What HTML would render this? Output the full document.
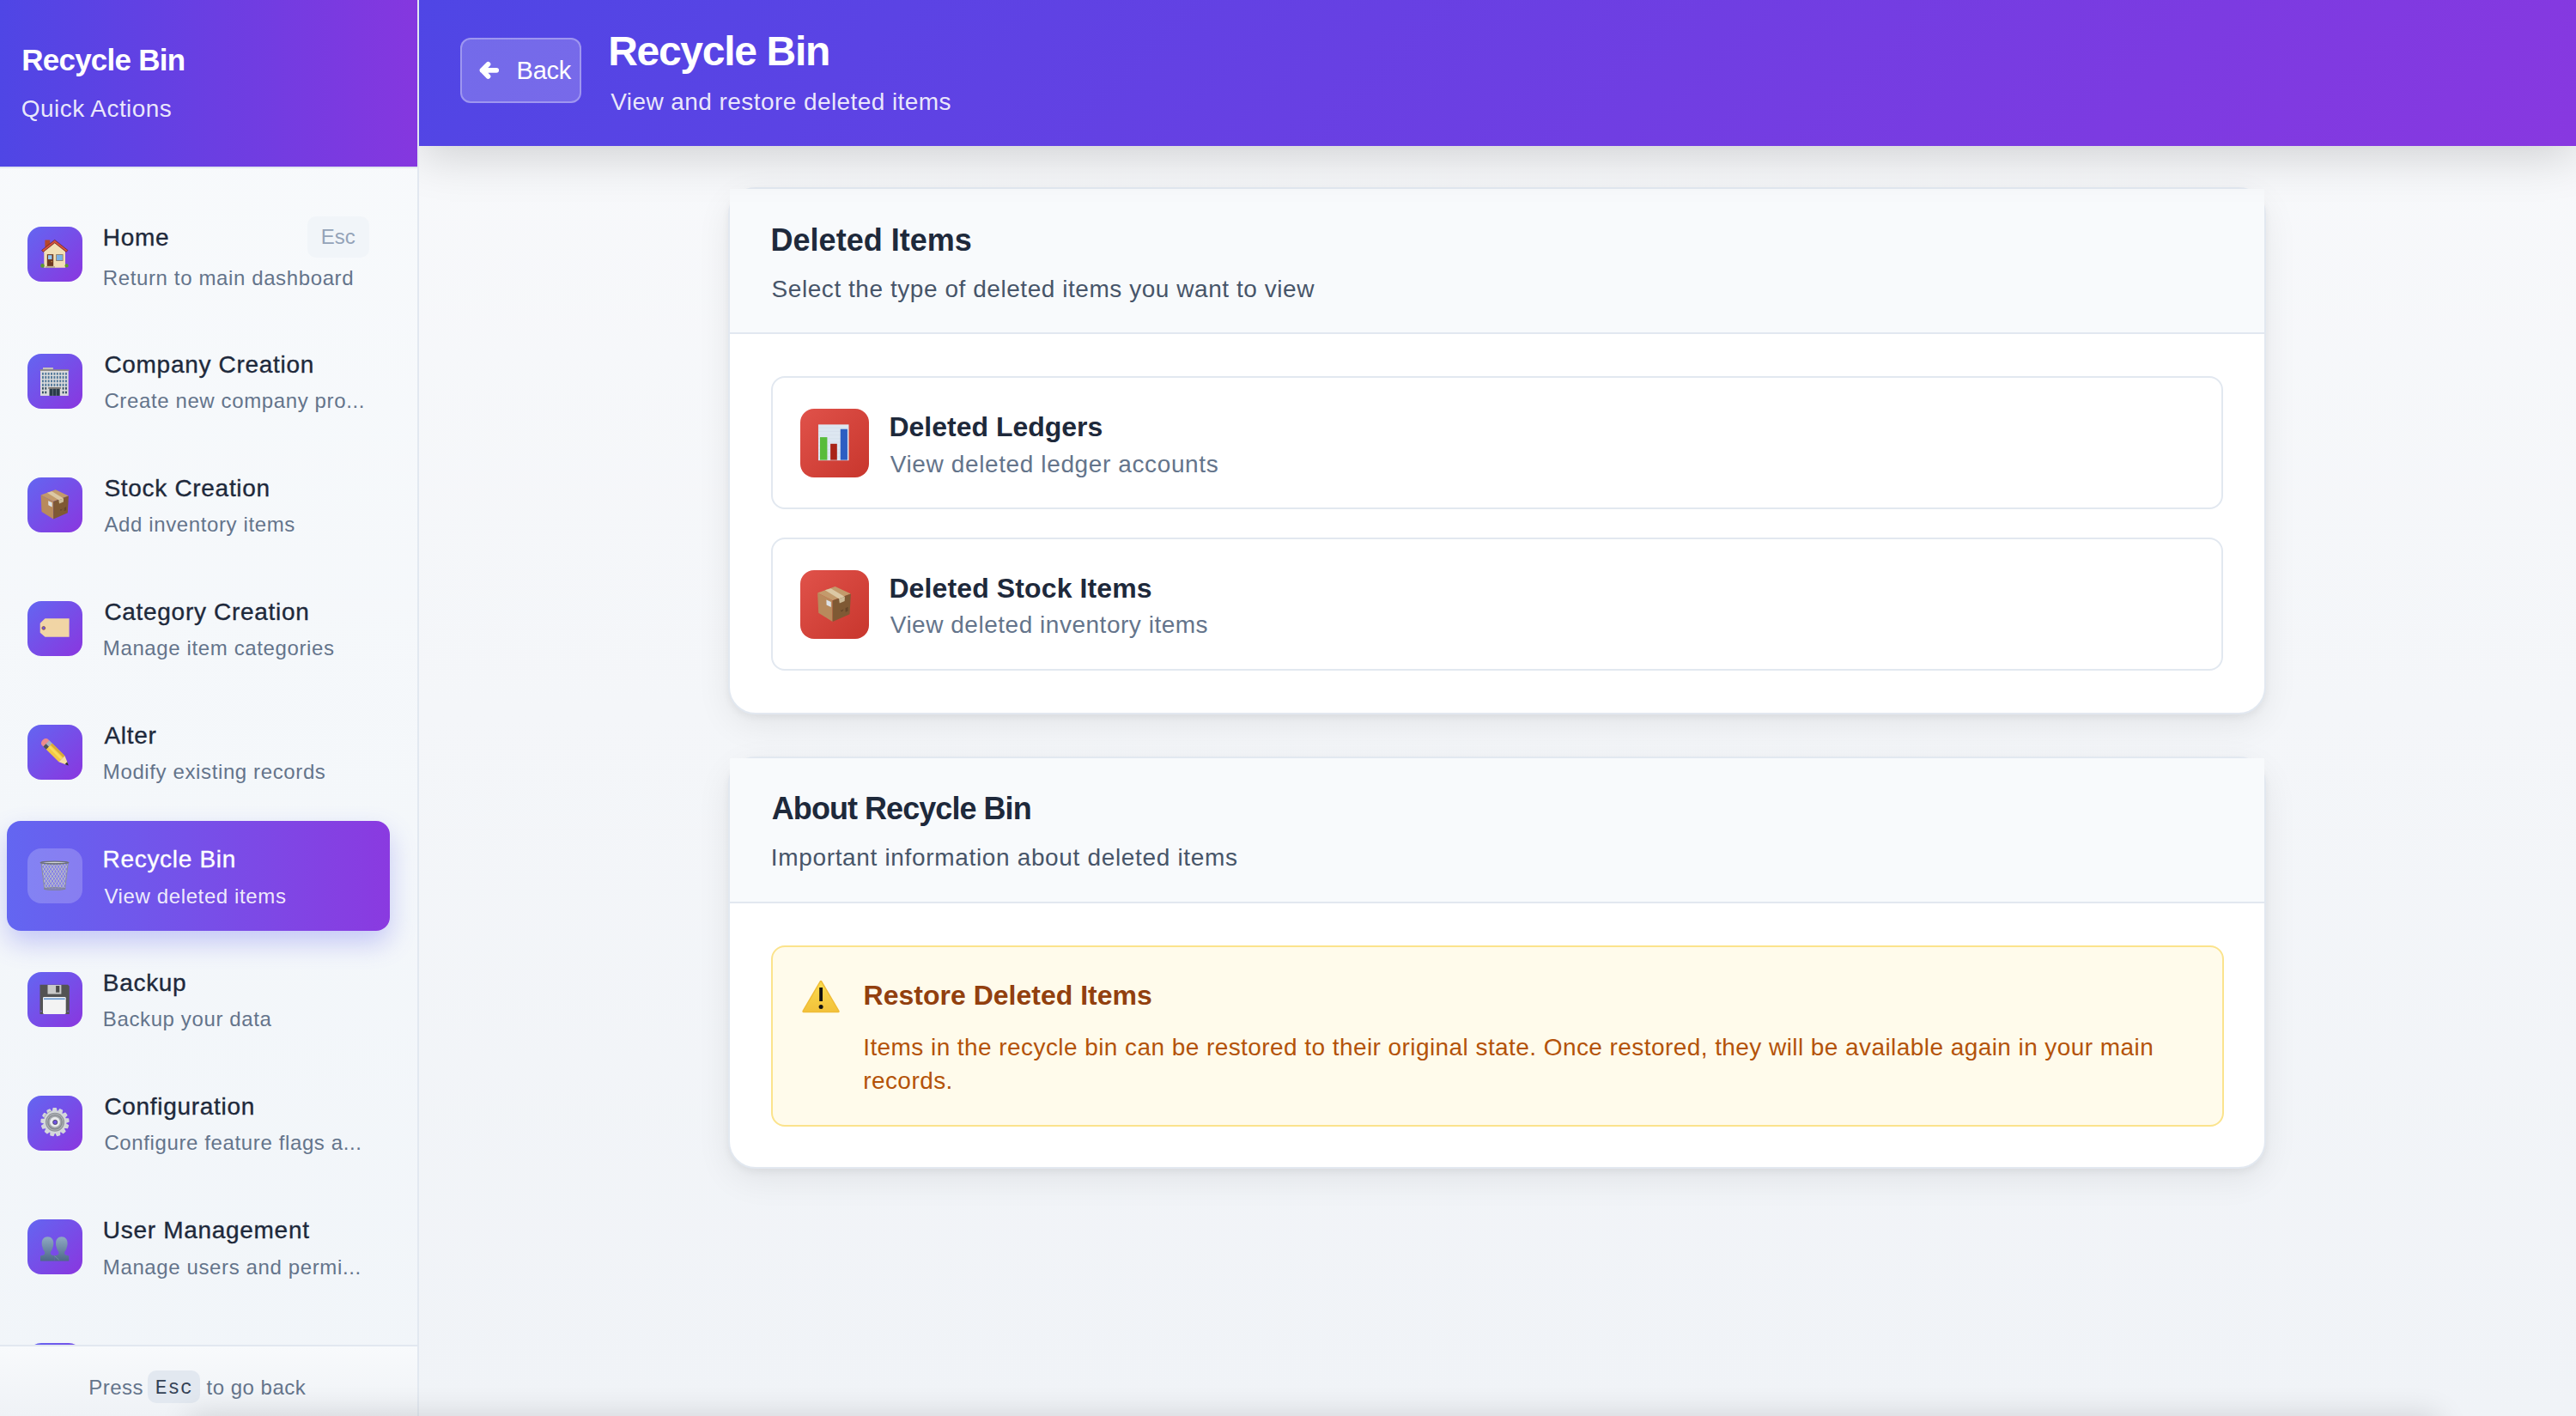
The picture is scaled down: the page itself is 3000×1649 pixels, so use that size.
<!DOCTYPE html><html><head><meta charset="utf-8"><title>Recycle Bin</title><style>html,body{margin:0;padding:0}
body{width:3000px;height:1649px;overflow:hidden;position:relative;font-family:"Liberation Sans",sans-serif;background:#F3F5F8}
div{box-sizing:border-box}
.t{position:absolute;line-height:1;white-space:nowrap;z-index:50}
.mainbg{position:absolute;left:488px;top:0;width:2512px;height:1649px;background:linear-gradient(180deg,#F8F9FB 0%,#F0F3F7 100%)}
.sb{z-index:10;position:absolute;left:0;top:0;width:488px;height:1649px;background:linear-gradient(180deg,#F8FAFC 0%,#F1F5F9 100%);border-right:2px solid #E2E8F0}
.sbh{z-index:10;position:absolute;left:0;top:0;width:486px;height:194px;background:linear-gradient(90deg,#4F46E5 0%,#8537DF 100%)}
.sbline{z-index:10;position:absolute;left:0;top:194px;width:486px;height:2px;background:#E2E8F0}
.sbnav{z-index:10;position:absolute;left:0;top:196px;width:486px;height:1370px;overflow:hidden}
.sbnav > div{margin-top:-196px}
.active{position:absolute;left:8px;top:956px;width:446px;height:128px;border-radius:16px;background:linear-gradient(90deg,#6366F1 0%,#8A3AE0 100%);box-shadow:0 14px 30px rgba(99,102,241,0.33)}
.ic{position:absolute;left:32px;width:64px;height:64px;border-radius:16px;background:linear-gradient(135deg,#6366F1 0%,#8A36DF 100%)}
.ic.act{background:rgba(255,255,255,0.2)}
.ic svg{position:absolute;left:8px;top:6px;width:50px;height:50px;overflow:visible}
.badge{position:absolute;left:358px;top:252px;width:72px;height:48px;border-radius:10px;background:#F1F5F9}
.sbft{z-index:10;position:absolute;left:0;top:1566px;width:486px;height:83px;border-top:2px solid #E2E8F0;background:linear-gradient(180deg,#F8FAFC 0%,#EFF2F6 100%)}
.kbd{z-index:11;position:absolute;left:172px;top:1596px;width:61px;height:38px;border-radius:10px;background:#E2E8F0}
.mh{position:absolute;left:488px;top:0;width:2512px;height:170px;background:linear-gradient(135deg,#4F46E5 0%,#8838E0 100%);box-shadow:0 12px 52px rgba(0,0,0,0.16);z-index:5}
.backbtn{position:absolute;left:536px;top:44px;width:141px;height:76px;border-radius:12px;background:rgba(255,255,255,0.2);border:2px solid rgba(255,255,255,0.3);z-index:6}
.arrow{position:absolute;left:550px;top:64px;width:40px;height:36px;z-index:7}
.card{position:absolute;left:848px;width:1791px;border:2px solid #E2E8F0;border-radius:32px;background:#fff;box-shadow:0 4px 8px rgba(0,0,0,0.05),0 12px 40px rgba(0,0,0,0.07)}
.c1{top:218px;height:614px}
.c2{top:880.5px;height:480.5px}
.ch{position:absolute;left:850px;width:1787px;background:#F8FAFC;border-bottom:2px solid #E2E8F0}
.c1h{top:220px;height:169px}
.c2h{top:882.5px;height:169px}
.opt{position:absolute;left:898px;width:1691px;border:2px solid #E2E8F0;border-radius:16px;background:#fff}
.o1{top:438px;height:155px}
.o2{top:626px;height:155px}
.ric{position:absolute;left:932px;width:80px;height:80px;border-radius:16px;background:linear-gradient(135deg,#E0524A 0%,#C8362D 100%)}
.ric svg{position:absolute;left:11.2px;top:8.8px;width:60px;height:60px;overflow:visible}
.warn{position:absolute;left:898px;top:1100.5px;width:1692px;height:211px;border:2px solid #FBE38C;border-radius:16px;background:#FFFBEB}
.warnic{position:absolute;left:930px;top:1136px;width:52px;height:48px}
.bshade{position:absolute;left:220px;top:1655px;width:2620px;height:60px;box-shadow:0 -6px 36px rgba(0,0,0,0.14);z-index:100;pointer-events:none}
</style></head><body>
<div class="mainbg"></div>
<div class="sb"></div><div class="sbh"></div><div class="sbline"></div>
<div class="sbnav">
<div class="ic" style="top:264px"><svg viewBox="0 0 50 50">
<rect x="12.4" y="9.5" width="5.8" height="8" fill="#B5482B"/>
<polygon points="11.3,41.7 11.3,22.2 23.7,12.2 36,22.2 36,41.7" fill="#F2E0B6"/>
<polygon points="8.6,21.4 23.7,9.4 38.9,21.4 37.1,23.4 23.7,12.9 10.4,23.4" fill="#D4503C" stroke="#5E241A" stroke-width="0.7" stroke-linejoin="round"/>
<rect x="14.8" y="26.1" width="7.4" height="13.8" fill="#6E3A22"/>
<rect x="16" y="27.2" width="4.5" height="4.8" fill="#94C8F2"/>
<rect x="19.6" y="34.2" width="1.2" height="1" fill="#E8B040"/>
<rect x="25.2" y="26.1" width="8.3" height="7.8" fill="#8B6F50"/>
<rect x="25.9" y="26.8" width="6.9" height="6.4" fill="#7AB3E6"/>
<circle cx="9.5" cy="39.4" r="2.3" fill="#5C9A2E"/>
<circle cx="37.6" cy="39.4" r="2.1" fill="#5C9A2E"/>
<rect x="13" y="40.3" width="11" height="1.4" fill="#A39A88"/>
</svg></div>
<div class="ic" style="top:412px"><svg viewBox="0 0 50 50"><rect x="10" y="10" width="11.9" height="2.4" fill="#C5C0B8"/><rect x="6.7" y="12.2" width="33.7" height="1.8" fill="#8C877F"/><rect x="7" y="13.9" width="32.7" height="29" fill="#DCDCDC"/><rect x="8.95" y="15.9" width="1.9" height="2.8" fill="#4F7697"/><rect x="12.33" y="15.9" width="1.9" height="2.8" fill="#4F7697"/><rect x="15.71" y="15.9" width="1.9" height="2.8" fill="#4F7697"/><rect x="19.09" y="15.9" width="1.9" height="2.8" fill="#4F7697"/><rect x="22.47" y="15.9" width="1.9" height="2.8" fill="#4F7697"/><rect x="25.85" y="15.9" width="1.9" height="2.8" fill="#4F7697"/><rect x="29.23" y="15.9" width="1.9" height="2.8" fill="#4F7697"/><rect x="32.61" y="15.9" width="1.9" height="2.8" fill="#4F7697"/><rect x="35.99" y="15.9" width="1.9" height="2.8" fill="#4F7697"/><rect x="8.95" y="20.0" width="1.9" height="3.0" fill="#4F7697"/><rect x="12.33" y="20.0" width="1.9" height="3.0" fill="#4F7697"/><rect x="15.71" y="20.0" width="1.9" height="3.0" fill="#4F7697"/><rect x="19.09" y="20.0" width="1.9" height="3.0" fill="#4F7697"/><rect x="22.47" y="20.0" width="1.9" height="3.0" fill="#4F7697"/><rect x="25.85" y="20.0" width="1.9" height="3.0" fill="#4F7697"/><rect x="29.23" y="20.0" width="1.9" height="3.0" fill="#4F7697"/><rect x="32.61" y="20.0" width="1.9" height="3.0" fill="#4F7697"/><rect x="35.99" y="20.0" width="1.9" height="3.0" fill="#4F7697"/><rect x="8.95" y="24.4" width="1.9" height="2.8" fill="#4F7697"/><rect x="12.33" y="24.4" width="1.9" height="2.8" fill="#4F7697"/><rect x="15.71" y="24.4" width="1.9" height="2.8" fill="#4F7697"/><rect x="19.09" y="24.4" width="1.9" height="2.8" fill="#4F7697"/><rect x="22.47" y="24.4" width="1.9" height="2.8" fill="#4F7697"/><rect x="25.85" y="24.4" width="1.9" height="2.8" fill="#4F7697"/><rect x="29.23" y="24.4" width="1.9" height="2.8" fill="#4F7697"/><rect x="32.61" y="24.4" width="1.9" height="2.8" fill="#4F7697"/><rect x="35.99" y="24.4" width="1.9" height="2.8" fill="#4F7697"/><rect x="8.95" y="28.8" width="1.9" height="3.0" fill="#4F7697"/><rect x="12.33" y="28.8" width="1.9" height="3.0" fill="#4F7697"/><rect x="15.71" y="28.8" width="1.9" height="3.0" fill="#4F7697"/><rect x="19.09" y="28.8" width="1.9" height="3.0" fill="#4F7697"/><rect x="22.47" y="28.8" width="1.9" height="3.0" fill="#4F7697"/><rect x="25.85" y="28.8" width="1.9" height="3.0" fill="#4F7697"/><rect x="29.23" y="28.8" width="1.9" height="3.0" fill="#4F7697"/><rect x="32.61" y="28.8" width="1.9" height="3.0" fill="#4F7697"/><rect x="35.99" y="28.8" width="1.9" height="3.0" fill="#4F7697"/><rect x="8.95" y="33" width="1.9" height="2.7" fill="#2F4A5E"/><rect x="12.33" y="33" width="1.9" height="2.7" fill="#2F4A5E"/><rect x="32.61" y="33" width="1.9" height="2.7" fill="#2F4A5E"/><rect x="35.99" y="33" width="1.9" height="2.7" fill="#2F4A5E"/><rect x="8.95" y="37.6" width="1.9" height="2.7" fill="#2F4A5E"/><rect x="12.33" y="37.6" width="1.9" height="2.7" fill="#2F4A5E"/><rect x="32.61" y="37.6" width="1.9" height="2.7" fill="#2F4A5E"/><rect x="35.99" y="37.6" width="1.9" height="2.7" fill="#2F4A5E"/><rect x="16.2" y="33" width="14.7" height="1.8" fill="#77726C"/><rect x="17.5" y="34.8" width="12.2" height="8.1" fill="#2A3B48"/><rect x="21.3" y="34.8" width="0.5" height="8.1" fill="#8FA0AC"/><rect x="25.4" y="34.8" width="0.5" height="8.1" fill="#8FA0AC"/></svg></div>
<div class="ic" style="top:556px"><svg viewBox="0 0 50 50">
<polygon points="7.6,14.5 24.7,8.3 39.9,15.5 22.2,21.9" fill="#C39A6B"/>
<polygon points="7.6,14.5 22.2,21.9 22.2,42.4 8.5,33.9" fill="#B88A5C"/>
<polygon points="22.2,21.9 39.9,15.5 38.8,35.3 22.2,42.4" fill="#7F5934"/>
<polygon points="14.8,11.8 20.5,10.2 34.1,18.4 28.4,20.3" fill="#DCC8A4"/>
<polygon points="28.4,20.3 34.1,18.4 33.9,22.6 29,24.6" fill="#CDBB98"/>
<polygon points="16.2,21.2 20.7,23.3 20.7,28.4 16.3,26.2" fill="#DDE1E5"/>
<path d="M30 31.5 l1.2 0.8 l1.2 -1.6 M35.2 29 v4 M36.6 28.4 v4" stroke="#4A3420" stroke-width="0.6" fill="none"/>
</svg></div>
<div class="ic" style="top:700px"><svg viewBox="0 0 50 50">
<polygon points="6.7,19.8 12.5,14.3 40.6,14.3 40.6,35.8 12.5,35.8 6.7,30.7" fill="#F1D5A5"/>
<circle cx="10.8" cy="25.4" r="1.9" fill="#6F56E6" stroke="#8B5A3C" stroke-width="0.9"/>
</svg></div>
<div class="ic" style="top:844px"><svg viewBox="0 0 50 50">
<g transform="translate(11.2,13.2) rotate(44.7)">
<path d="M4 -5 H1.5 A3.5 5 0 0 0 1.5 5 H4 Z" fill="#EC8C8C"/>
<rect x="3.8" y="-5" width="5" height="10" fill="#A9B3BF"/>
<rect x="3.8" y="0.5" width="5" height="4.5" fill="#4E5257"/>
<rect x="8.6" y="-5" width="20.6" height="10" fill="#F2C744"/>
<rect x="8.6" y="-5" width="20.6" height="2.6" fill="#D7A93A"/>
<rect x="8.6" y="-1.4" width="20.6" height="2.8" fill="#F8DC58"/>
<polygon points="29.2,-5 29.2,5 37.6,1.3 37.6,-1.3" fill="#F6DFA2"/>
<polygon points="36.2,-1.9 36.2,1.9 40.2,0" fill="#2E2E2E"/>
</g>
</svg></div>
<div class="active"></div>
<div class="ic act" style="top:988px"><svg viewBox="0 0 50 50"><defs><clipPath id="tcl"><polygon points="8.1,11.7 39.2,11.7 35.7,40.5 11.7,40.5"/></clipPath></defs><g clip-path="url(#tcl)" stroke="#6E7278" stroke-width="1.3" opacity="0.3"><line x1="-34.0" y1="11" x2="-14.0" y2="42" /><line x1="-14.0" y1="11" x2="-34.0" y2="42" /><line x1="-30.4" y1="11" x2="-10.4" y2="42" /><line x1="-10.4" y1="11" x2="-30.4" y2="42" /><line x1="-26.8" y1="11" x2="-6.8" y2="42" /><line x1="-6.8" y1="11" x2="-26.8" y2="42" /><line x1="-23.2" y1="11" x2="-3.2" y2="42" /><line x1="-3.2" y1="11" x2="-23.2" y2="42" /><line x1="-19.6" y1="11" x2="0.4" y2="42" /><line x1="0.4" y1="11" x2="-19.6" y2="42" /><line x1="-16.0" y1="11" x2="4.0" y2="42" /><line x1="4.0" y1="11" x2="-16.0" y2="42" /><line x1="-12.4" y1="11" x2="7.6" y2="42" /><line x1="7.6" y1="11" x2="-12.4" y2="42" /><line x1="-8.8" y1="11" x2="11.2" y2="42" /><line x1="11.2" y1="11" x2="-8.8" y2="42" /><line x1="-5.2" y1="11" x2="14.8" y2="42" /><line x1="14.8" y1="11" x2="-5.2" y2="42" /><line x1="-1.6" y1="11" x2="18.4" y2="42" /><line x1="18.4" y1="11" x2="-1.6" y2="42" /><line x1="2.0" y1="11" x2="22.0" y2="42" /><line x1="22.0" y1="11" x2="2.0" y2="42" /><line x1="5.6" y1="11" x2="25.6" y2="42" /><line x1="25.6" y1="11" x2="5.6" y2="42" /><line x1="9.2" y1="11" x2="29.2" y2="42" /><line x1="29.2" y1="11" x2="9.2" y2="42" /><line x1="12.8" y1="11" x2="32.8" y2="42" /><line x1="32.8" y1="11" x2="12.8" y2="42" /><line x1="16.4" y1="11" x2="36.4" y2="42" /><line x1="36.4" y1="11" x2="16.4" y2="42" /><line x1="20.0" y1="11" x2="40.0" y2="42" /><line x1="40.0" y1="11" x2="20.0" y2="42" /><line x1="23.6" y1="11" x2="43.6" y2="42" /><line x1="43.6" y1="11" x2="23.6" y2="42" /><line x1="27.2" y1="11" x2="47.2" y2="42" /><line x1="47.2" y1="11" x2="27.2" y2="42" /><line x1="30.8" y1="11" x2="50.8" y2="42" /><line x1="50.8" y1="11" x2="30.8" y2="42" /><line x1="34.4" y1="11" x2="54.4" y2="42" /><line x1="54.4" y1="11" x2="34.4" y2="42" /><line x1="38.0" y1="11" x2="58.0" y2="42" /><line x1="58.0" y1="11" x2="38.0" y2="42" /><line x1="41.6" y1="11" x2="61.6" y2="42" /><line x1="61.6" y1="11" x2="41.6" y2="42" /><line x1="45.2" y1="11" x2="65.2" y2="42" /><line x1="65.2" y1="11" x2="45.2" y2="42" /><line x1="48.8" y1="11" x2="68.8" y2="42" /><line x1="68.8" y1="11" x2="48.8" y2="42" /><line x1="52.4" y1="11" x2="72.4" y2="42" /><line x1="72.4" y1="11" x2="52.4" y2="42" /><line x1="56.0" y1="11" x2="76.0" y2="42" /><line x1="76.0" y1="11" x2="56.0" y2="42" /><line x1="59.6" y1="11" x2="79.6" y2="42" /><line x1="79.6" y1="11" x2="59.6" y2="42" /><line x1="63.2" y1="11" x2="83.2" y2="42" /><line x1="83.2" y1="11" x2="63.2" y2="42" /><line x1="66.8" y1="11" x2="86.8" y2="42" /><line x1="86.8" y1="11" x2="66.8" y2="42" /><line x1="70.4" y1="11" x2="90.4" y2="42" /><line x1="90.4" y1="11" x2="70.4" y2="42" /><line x1="74.0" y1="11" x2="94.0" y2="42" /><line x1="94.0" y1="11" x2="74.0" y2="42" /><line x1="77.6" y1="11" x2="97.6" y2="42" /><line x1="97.6" y1="11" x2="77.6" y2="42" /></g><g clip-path="url(#tcl)" stroke="#C9CDD2" stroke-width="0.8"><line x1="-34.0" y1="11" x2="-14.0" y2="42" /><line x1="-14.0" y1="11" x2="-34.0" y2="42" /><line x1="-30.4" y1="11" x2="-10.4" y2="42" /><line x1="-10.4" y1="11" x2="-30.4" y2="42" /><line x1="-26.8" y1="11" x2="-6.8" y2="42" /><line x1="-6.8" y1="11" x2="-26.8" y2="42" /><line x1="-23.2" y1="11" x2="-3.2" y2="42" /><line x1="-3.2" y1="11" x2="-23.2" y2="42" /><line x1="-19.6" y1="11" x2="0.4" y2="42" /><line x1="0.4" y1="11" x2="-19.6" y2="42" /><line x1="-16.0" y1="11" x2="4.0" y2="42" /><line x1="4.0" y1="11" x2="-16.0" y2="42" /><line x1="-12.4" y1="11" x2="7.6" y2="42" /><line x1="7.6" y1="11" x2="-12.4" y2="42" /><line x1="-8.8" y1="11" x2="11.2" y2="42" /><line x1="11.2" y1="11" x2="-8.8" y2="42" /><line x1="-5.2" y1="11" x2="14.8" y2="42" /><line x1="14.8" y1="11" x2="-5.2" y2="42" /><line x1="-1.6" y1="11" x2="18.4" y2="42" /><line x1="18.4" y1="11" x2="-1.6" y2="42" /><line x1="2.0" y1="11" x2="22.0" y2="42" /><line x1="22.0" y1="11" x2="2.0" y2="42" /><line x1="5.6" y1="11" x2="25.6" y2="42" /><line x1="25.6" y1="11" x2="5.6" y2="42" /><line x1="9.2" y1="11" x2="29.2" y2="42" /><line x1="29.2" y1="11" x2="9.2" y2="42" /><line x1="12.8" y1="11" x2="32.8" y2="42" /><line x1="32.8" y1="11" x2="12.8" y2="42" /><line x1="16.4" y1="11" x2="36.4" y2="42" /><line x1="36.4" y1="11" x2="16.4" y2="42" /><line x1="20.0" y1="11" x2="40.0" y2="42" /><line x1="40.0" y1="11" x2="20.0" y2="42" /><line x1="23.6" y1="11" x2="43.6" y2="42" /><line x1="43.6" y1="11" x2="23.6" y2="42" /><line x1="27.2" y1="11" x2="47.2" y2="42" /><line x1="47.2" y1="11" x2="27.2" y2="42" /><line x1="30.8" y1="11" x2="50.8" y2="42" /><line x1="50.8" y1="11" x2="30.8" y2="42" /><line x1="34.4" y1="11" x2="54.4" y2="42" /><line x1="54.4" y1="11" x2="34.4" y2="42" /><line x1="38.0" y1="11" x2="58.0" y2="42" /><line x1="58.0" y1="11" x2="38.0" y2="42" /><line x1="41.6" y1="11" x2="61.6" y2="42" /><line x1="61.6" y1="11" x2="41.6" y2="42" /><line x1="45.2" y1="11" x2="65.2" y2="42" /><line x1="65.2" y1="11" x2="45.2" y2="42" /><line x1="48.8" y1="11" x2="68.8" y2="42" /><line x1="68.8" y1="11" x2="48.8" y2="42" /><line x1="52.4" y1="11" x2="72.4" y2="42" /><line x1="72.4" y1="11" x2="52.4" y2="42" /><line x1="56.0" y1="11" x2="76.0" y2="42" /><line x1="76.0" y1="11" x2="56.0" y2="42" /><line x1="59.6" y1="11" x2="79.6" y2="42" /><line x1="79.6" y1="11" x2="59.6" y2="42" /><line x1="63.2" y1="11" x2="83.2" y2="42" /><line x1="83.2" y1="11" x2="63.2" y2="42" /><line x1="66.8" y1="11" x2="86.8" y2="42" /><line x1="86.8" y1="11" x2="66.8" y2="42" /><line x1="70.4" y1="11" x2="90.4" y2="42" /><line x1="90.4" y1="11" x2="70.4" y2="42" /><line x1="74.0" y1="11" x2="94.0" y2="42" /><line x1="94.0" y1="11" x2="74.0" y2="42" /><line x1="77.6" y1="11" x2="97.6" y2="42" /><line x1="97.6" y1="11" x2="77.6" y2="42" /></g><path d="M8.1 11.7 L11.7 40.5 M39.2 11.7 L35.7 40.5" stroke="#8A8E92" stroke-width="0.9"/><ellipse cx="23.5" cy="10.6" rx="16.3" ry="1.4" fill="none" stroke="#6E7274" stroke-width="1.5"/><ellipse cx="23.5" cy="10.3" rx="13" ry="0.6" fill="#D0D4D6"/><ellipse cx="23.8" cy="41" rx="12.2" ry="1.1" fill="none" stroke="#7E8385" stroke-width="1.3"/></svg></div>
<div class="ic" style="top:1132px"><svg viewBox="0 0 50 50">
<path d="M6.5 8.7 H39 L40.8 10.5 V42.9 H6.5 Z" fill="#535353"/>
<rect x="15.5" y="9" width="15.9" height="10.6" fill="#C9C9C9"/>
<rect x="25.1" y="10" width="4.2" height="7.7" fill="#4A4A4A"/>
<rect x="10" y="23" width="26.7" height="19.9" rx="1.3" fill="#F3F3F3"/>
<rect x="11" y="24.4" width="24.7" height="1.7" fill="#6B9BD2"/>
<rect x="7.2" y="38.8" width="1.6" height="1.6" fill="#7B62DA"/>
<rect x="38.3" y="38.8" width="1.6" height="1.6" fill="#7B62DA"/>
</svg></div>
<div class="ic" style="top:1276px"><svg viewBox="0 0 50 50"><path d="M35.99 20.81 L39.46 20.98 L39.89 24.02 L36.59 25.13 L36.42 26.83 L39.42 28.59 L38.38 31.48 L34.95 30.94 L34.01 32.36 L35.84 35.31 L33.59 37.39 L30.80 35.31 L29.30 36.13 L29.56 39.60 L26.59 40.39 L25.09 37.25 L23.38 37.28 L22.00 40.47 L19.01 39.80 L19.13 36.32 L17.61 35.56 L14.90 37.74 L12.56 35.75 L14.29 32.73 L13.29 31.34 L9.88 32.01 L8.74 29.16 L11.67 27.29 L11.43 25.61 L8.10 24.61 L8.41 21.56 L11.88 21.27 L12.45 19.66 L9.96 17.24 L11.66 14.68 L14.86 16.03 L16.12 14.87 L15.04 11.57 L17.73 10.09 L19.94 12.77 L21.59 12.33 L22.17 8.91 L25.24 8.85 L25.95 12.25 L27.61 12.63 L29.72 9.86 L32.46 11.24 L31.51 14.58 L32.81 15.69 L35.96 14.22 L37.75 16.71 L35.35 19.23Z" fill="#D4D7DB" stroke="#D4D7DB" stroke-width="1.6" stroke-linejoin="round"/><path d="M11 21 A13.5 13.5 0 0 1 20 11.8" stroke="#6A6E72" stroke-width="0.7" fill="none" opacity="0.6"/><circle cx="24" cy="24.7" r="11" fill="#8F9398"/><circle cx="24" cy="24.7" r="9.9" fill="#AEB2B6"/><circle cx="24" cy="24.7" r="8.8" fill="#82868B"/><circle cx="24" cy="24.7" r="7.6" fill="#A3A7AB"/><circle cx="24" cy="24.7" r="5.9" fill="#E9EBED"/><circle cx="24.2" cy="24.9" r="2.6" fill="#6F52E2" stroke="#3A3A40" stroke-width="0.7"/></svg></div>
<div class="ic" style="top:1420px"><svg viewBox="0 0 50 50">
<defs><linearGradient id="bg1" x1="0" y1="0" x2="0" y2="1"><stop offset="0" stop-color="#8FAAC3"/><stop offset="1" stop-color="#4D6888"/></linearGradient></defs>
<g fill="url(#bg1)">
<path d="M15.5 14.3 C20 14.3 22.3 17.6 22.3 21.8 C22.3 24.2 22 25.4 21.6 26 C21 29.2 19.8 31 18.9 31.8 L18.9 34.2 C19.6 35.4 21.5 36 23.6 36.3 L23.6 42.6 H7 V36.4 C9.6 36 11.5 35.4 12.1 34.2 L12.1 31.8 C11.2 31 10 29.2 9.4 26 C9 25.4 8.7 24.2 8.7 21.8 C8.7 17.6 11 14.3 15.5 14.3 Z"/>
<path d="M31.8 14.3 C36.3 14.3 38.6 17.6 38.6 21.8 C38.6 24.2 38.3 25.4 37.9 26 C37.3 29.2 36.1 31 35.2 31.8 L35.2 34.2 C35.9 35.4 37.8 36 40.3 36.4 V42.6 H23.6 V36.3 C25.8 36 27.7 35.4 28.4 34.2 L28.4 31.8 C27.5 31 26.3 29.2 25.7 26 C25.3 25.4 25 24.2 25 21.8 C25 17.6 27.3 14.3 31.8 14.3 Z"/>
</g>
<path d="M23.6 36.8 Q26.5 38.5 28.8 41.5" stroke="#9DB4C8" stroke-width="0.5" fill="none" opacity="0.8"/>
</svg></div>
<div class="ic" style="top:1564px"></div>
<div class="badge"></div>
</div>
<div class="sbft"></div><div class="kbd"></div>
<div class="mh"></div><div class="backbtn"></div><svg class="arrow" viewBox="550 64 40 36"><path d="M578.2 81.8 H561.5 M568.5 74.7 L561.5 81.8 L568.5 88.9" stroke="#FFFFFF" stroke-width="5.7" stroke-linecap="round" stroke-linejoin="round" fill="none"/></svg>
<div class="card c1"></div><div class="ch c1h"></div>
<div class="opt o1"></div><div class="ric" style="top:476px"><svg viewBox="0 0 50 50">
<rect x="8.3" y="7.8" width="29.6" height="34.9" fill="#DDE7F1"/>
<g stroke="#C9D6E4" stroke-width="0.3">
<line x1="8.3" y1="11" x2="37.9" y2="11"/><line x1="8.3" y1="14.5" x2="37.9" y2="14.5"/><line x1="8.3" y1="18" x2="37.9" y2="18"/>
<line x1="8.3" y1="21.5" x2="37.9" y2="21.5"/><line x1="8.3" y1="25" x2="37.9" y2="25"/><line x1="8.3" y1="28.5" x2="37.9" y2="28.5"/>
<line x1="8.3" y1="32" x2="37.9" y2="32"/><line x1="8.3" y1="35.5" x2="37.9" y2="35.5"/><line x1="8.3" y1="39" x2="37.9" y2="39"/>
</g>
<rect x="10" y="20.1" width="7" height="22.1" fill="#58BC3A"/>
<rect x="20.1" y="26.5" width="6.4" height="15.7" fill="#A92418"/>
<rect x="29.8" y="12.25" width="6.8" height="29.95" fill="#2C5EC2"/>
</svg></div>
<div class="opt o2"></div><div class="ric" style="top:664px"><svg viewBox="0 0 50 50">
<polygon points="7.6,14.5 24.7,8.3 39.9,15.5 22.2,21.9" fill="#C39A6B"/>
<polygon points="7.6,14.5 22.2,21.9 22.2,42.4 8.5,33.9" fill="#B88A5C"/>
<polygon points="22.2,21.9 39.9,15.5 38.8,35.3 22.2,42.4" fill="#7F5934"/>
<polygon points="14.8,11.8 20.5,10.2 34.1,18.4 28.4,20.3" fill="#DCC8A4"/>
<polygon points="28.4,20.3 34.1,18.4 33.9,22.6 29,24.6" fill="#CDBB98"/>
<polygon points="16.2,21.2 20.7,23.3 20.7,28.4 16.3,26.2" fill="#DDE1E5"/>
<path d="M30 31.5 l1.2 0.8 l1.2 -1.6 M35.2 29 v4 M36.6 28.4 v4" stroke="#4A3420" stroke-width="0.6" fill="none"/>
</svg></div>
<div class="card c2"></div><div class="ch c2h"></div>
<div class="warn"></div><svg class="warnic" viewBox="930 1136 52 48"><defs><linearGradient id="wg" x1="0" y1="0" x2="0" y2="1"><stop offset="0" stop-color="#FADB4E"/><stop offset="1" stop-color="#F3C23A"/></linearGradient></defs>
<path d="M956 1143.2 L935.8 1177.8 L976.2 1177.8 Z" fill="url(#wg)" stroke="#F0BC36" stroke-width="3" stroke-linejoin="round"/><path d="M956 1143.2 L935.8 1177.8 L976.2 1177.8 Z" fill="url(#wg)"/>
<rect x="954.2" y="1150" width="3.8" height="16" fill="#111"/>
<circle cx="956.1" cy="1172.5" r="2.5" fill="#111"/></svg>
<div class="bshade"></div>
<div class="t" id="sb_title" style="left:25.20px;top:52.47px;font-size:35px;font-weight:700;color:#FFFFFF;letter-spacing:-0.75px;font-family:'Liberation Sans', sans-serif;">Recycle Bin</div>
<div class="t" id="sb_sub" style="left:24.80px;top:112.90px;font-size:28px;font-weight:400;color:rgba(255,255,255,0.88);letter-spacing:0.45px;font-family:'Liberation Sans', sans-serif;">Quick Actions</div>
<div class="t" id="it_home" style="left:119.80px;top:263.00px;font-size:28px;font-weight:400;color:#1E293B;letter-spacing:0.7px;font-family:'Liberation Sans', sans-serif;-webkit-text-stroke:0.35px currentColor">Home</div>
<div class="t" id="id_home" style="left:119.80px;top:311.78px;font-size:24px;font-weight:400;color:#64748B;letter-spacing:0.62px;font-family:'Liberation Sans', sans-serif;">Return to main dashboard</div>
<div class="t" id="it_company" style="left:121.40px;top:411.00px;font-size:28px;font-weight:400;color:#1E293B;letter-spacing:0.7px;font-family:'Liberation Sans', sans-serif;-webkit-text-stroke:0.35px currentColor">Company Creation</div>
<div class="t" id="id_company" style="left:121.40px;top:455.08px;font-size:24px;font-weight:400;color:#64748B;letter-spacing:0.62px;font-family:'Liberation Sans', sans-serif;">Create new company pro...</div>
<div class="t" id="it_stock" style="left:121.40px;top:555.00px;font-size:28px;font-weight:400;color:#1E293B;letter-spacing:0.7px;font-family:'Liberation Sans', sans-serif;-webkit-text-stroke:0.35px currentColor">Stock Creation</div>
<div class="t" id="id_stock" style="left:121.40px;top:599.08px;font-size:24px;font-weight:400;color:#64748B;letter-spacing:0.62px;font-family:'Liberation Sans', sans-serif;">Add inventory items</div>
<div class="t" id="it_category" style="left:121.40px;top:699.00px;font-size:28px;font-weight:400;color:#1E293B;letter-spacing:0.7px;font-family:'Liberation Sans', sans-serif;-webkit-text-stroke:0.35px currentColor">Category Creation</div>
<div class="t" id="id_category" style="left:119.80px;top:743.08px;font-size:24px;font-weight:400;color:#64748B;letter-spacing:0.62px;font-family:'Liberation Sans', sans-serif;">Manage item categories</div>
<div class="t" id="it_alter" style="left:121.40px;top:843.00px;font-size:28px;font-weight:400;color:#1E293B;letter-spacing:0.7px;font-family:'Liberation Sans', sans-serif;-webkit-text-stroke:0.35px currentColor">Alter</div>
<div class="t" id="id_alter" style="left:119.80px;top:887.08px;font-size:24px;font-weight:400;color:#64748B;letter-spacing:0.62px;font-family:'Liberation Sans', sans-serif;">Modify existing records</div>
<div class="t" id="it_recycle" style="left:119.50px;top:987.30px;font-size:28px;font-weight:400;color:#FFFFFF;letter-spacing:0.7px;font-family:'Liberation Sans', sans-serif;-webkit-text-stroke:0.35px currentColor">Recycle Bin</div>
<div class="t" id="id_recycle" style="left:121.40px;top:1031.88px;font-size:24px;font-weight:400;color:rgba(255,255,255,0.9);letter-spacing:0.62px;font-family:'Liberation Sans', sans-serif;">View deleted items</div>
<div class="t" id="it_backup" style="left:119.80px;top:1131.00px;font-size:28px;font-weight:400;color:#1E293B;letter-spacing:0.7px;font-family:'Liberation Sans', sans-serif;-webkit-text-stroke:0.35px currentColor">Backup</div>
<div class="t" id="id_backup" style="left:119.80px;top:1175.08px;font-size:24px;font-weight:400;color:#64748B;letter-spacing:0.62px;font-family:'Liberation Sans', sans-serif;">Backup your data</div>
<div class="t" id="it_config" style="left:121.40px;top:1275.00px;font-size:28px;font-weight:400;color:#1E293B;letter-spacing:0.7px;font-family:'Liberation Sans', sans-serif;-webkit-text-stroke:0.35px currentColor">Configuration</div>
<div class="t" id="id_config" style="left:121.40px;top:1319.08px;font-size:24px;font-weight:400;color:#64748B;letter-spacing:0.62px;font-family:'Liberation Sans', sans-serif;">Configure feature flags a...</div>
<div class="t" id="it_users" style="left:119.80px;top:1419.00px;font-size:28px;font-weight:400;color:#1E293B;letter-spacing:0.7px;font-family:'Liberation Sans', sans-serif;-webkit-text-stroke:0.35px currentColor">User Management</div>
<div class="t" id="id_users" style="left:119.80px;top:1464.08px;font-size:24px;font-weight:400;color:#64748B;letter-spacing:0.62px;font-family:'Liberation Sans', sans-serif;">Manage users and permi...</div>
<div class="t" id="esc_badge" style="left:373.80px;top:264.28px;font-size:24px;font-weight:400;color:#94A3B8;letter-spacing:0px;font-family:'Liberation Sans', sans-serif;">Esc</div>
<div class="t" id="ft_press" style="left:103.20px;top:1603.58px;font-size:24px;font-weight:400;color:#64748B;letter-spacing:0.5px;font-family:'Liberation Sans', sans-serif;">Press</div>
<div class="t" id="ft_esc" style="left:180.80px;top:1606.33px;font-size:23px;font-weight:400;color:#334155;letter-spacing:0.8px;font-family:'Liberation Mono', monospace;">Esc</div>
<div class="t" id="ft_back" style="left:240.50px;top:1603.58px;font-size:24px;font-weight:400;color:#64748B;letter-spacing:0.5px;font-family:'Liberation Sans', sans-serif;">to go back</div>
<div class="t" id="hd_back" style="left:601.60px;top:67.75px;font-size:29px;font-weight:400;color:#FFFFFF;letter-spacing:-0.3px;font-family:'Liberation Sans', sans-serif;">Back</div>
<div class="t" id="hd_title" style="left:708.20px;top:36.37px;font-size:48px;font-weight:700;color:#FFFFFF;letter-spacing:-1.3px;font-family:'Liberation Sans', sans-serif;">Recycle Bin</div>
<div class="t" id="hd_sub" style="left:711.20px;top:104.70px;font-size:28px;font-weight:400;color:rgba(255,255,255,0.88);letter-spacing:0.43px;font-family:'Liberation Sans', sans-serif;">View and restore deleted items</div>
<div class="t" id="c1_title" style="left:897.60px;top:261.53px;font-size:36px;font-weight:700;color:#1E293B;letter-spacing:0px;font-family:'Liberation Sans', sans-serif;">Deleted Items</div>
<div class="t" id="c1_sub" style="left:898.60px;top:322.50px;font-size:28px;font-weight:400;color:#475569;letter-spacing:0.55px;font-family:'Liberation Sans', sans-serif;">Select the type of deleted items you want to view</div>
<div class="t" id="l_title" style="left:1035.40px;top:480.91px;font-size:32px;font-weight:700;color:#1E293B;letter-spacing:0px;font-family:'Liberation Sans', sans-serif;">Deleted Ledgers</div>
<div class="t" id="l_desc" style="left:1036.70px;top:526.50px;font-size:28px;font-weight:400;color:#64748B;letter-spacing:0.62px;font-family:'Liberation Sans', sans-serif;">View deleted ledger accounts</div>
<div class="t" id="s_title" style="left:1035.40px;top:669.21px;font-size:32px;font-weight:700;color:#1E293B;letter-spacing:0.12px;font-family:'Liberation Sans', sans-serif;">Deleted Stock Items</div>
<div class="t" id="s_desc" style="left:1036.70px;top:713.80px;font-size:28px;font-weight:400;color:#64748B;letter-spacing:0.52px;font-family:'Liberation Sans', sans-serif;">View deleted inventory items</div>
<div class="t" id="c2_title" style="left:898.80px;top:923.53px;font-size:36px;font-weight:700;color:#1E293B;letter-spacing:-0.95px;font-family:'Liberation Sans', sans-serif;">About Recycle Bin</div>
<div class="t" id="c2_sub" style="left:897.80px;top:984.70px;font-size:28px;font-weight:400;color:#475569;letter-spacing:0.66px;font-family:'Liberation Sans', sans-serif;">Important information about deleted items</div>
<div class="t" id="w_title" style="left:1005.60px;top:1143.41px;font-size:32px;font-weight:700;color:#92400E;letter-spacing:0px;font-family:'Liberation Sans', sans-serif;">Restore Deleted Items</div>
<div class="t" id="w_l1" style="left:1005.20px;top:1206.30px;font-size:28px;font-weight:400;color:#B45309;letter-spacing:0.43px;font-family:'Liberation Sans', sans-serif;">Items in the recycle bin can be restored to their original state. Once restored, they will be available again in your main</div>
<div class="t" id="w_l2" style="left:1005.20px;top:1244.90px;font-size:28px;font-weight:400;color:#B45309;letter-spacing:0.43px;font-family:'Liberation Sans', sans-serif;">records.</div>
</body></html>
